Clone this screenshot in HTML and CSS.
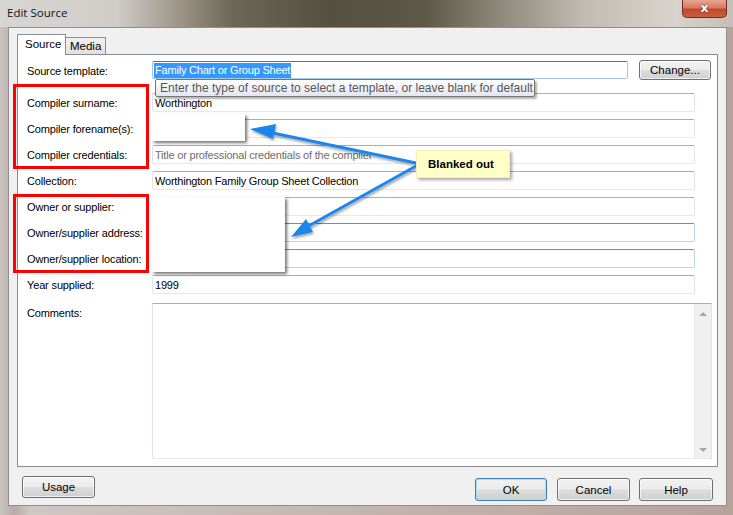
FILE: index.html
```html
<!DOCTYPE html>
<html>
<head>
<meta charset="utf-8">
<link rel="stylesheet" href="styles.css">
</head>
<body>
<div class="window">
  <div class="titlebar">
    <span class="title">Edit Source</span>
    <div class="close"><span>x</span></div>
  </div>
  <div class="client">
    <div class="tabs">
      <div class="tab active">Source</div>
      <div class="tab">Media</div>
    </div>
    <div class="panel">
      <div class="row first">
        <span class="label">Source template:</span>
        <div class="input focus"><span class="sel">Family Chart or Group Sheet</span></div>
        <div class="btn change">Change...</div>
      </div>
      <div class="row"><span class="label">Compiler surname:</span><div class="input">Worthington</div></div>
      <div class="row"><span class="label">Compiler forename(s):</span><div class="input"></div></div>
      <div class="row"><span class="label">Compiler credentials:</span><div class="input placeholder">Title or professional credentials of the compiler</div></div>
      <div class="row"><span class="label">Collection:</span><div class="input">Worthington Family Group Sheet Collection</div></div>
      <div class="row"><span class="label">Owner or supplier:</span><div class="input"></div></div>
      <div class="row"><span class="label">Owner/supplier address:</span><div class="input hover"></div></div>
      <div class="row"><span class="label">Owner/supplier location:</span><div class="input hover"></div></div>
      <div class="row"><span class="label">Year supplied:</span><div class="input">1999</div></div>
      <div class="row comments">
        <span class="label">Comments:</span>
        <div class="textarea">
          <div class="scrollbar"><span class="arr up"></span><span class="arr down"></span></div>
        </div>
      </div>
    </div>
    <div class="footer">
      <div class="btn usage">Usage</div>
      <div class="spacer"></div>
      <div class="btn ok">OK</div>
      <div class="btn cancel">Cancel</div>
      <div class="btn help">Help</div>
    </div>
  </div>

  <div class="tooltip">Enter the type of source to select a template, or leave blank for default</div>
  <div class="blank blank1"></div>
  <div class="blank blank2"></div>
  <div class="redbox red1"></div>
  <div class="redbox red2"></div>
  <svg class="arrows" width="733" height="515" viewBox="0 0 733 515">
    <defs>
      <filter id="sh" x="-10%" y="-10%" width="120%" height="130%">
        <feDropShadow dx="1" dy="2" stdDeviation="1" flood-color="#000" flood-opacity="0.35"/>
      </filter>
    </defs>
    <g filter="url(#sh)" fill="#1e86ea" stroke="#1e86ea" stroke-width="3" stroke-linecap="round">
      <line x1="416" y1="163" x2="268" y2="132"/>
      <polygon stroke="none" points="250,129 276,124 273,139"/>
      <line x1="416" y1="166" x2="305" y2="228"/>
      <polygon stroke="none" points="291,237 306,219 313,232"/>
    </g>
  </svg>
  <div class="callout">Blanked out</div>
</div>
</body>
</html>
```
FILE: styles.css
```css
html, body {
  margin: 0;
  padding: 0;
}
body {
  width: 733px;
  height: 515px;
  overflow: hidden;
  font-family: "Liberation Sans", Arial, sans-serif;
  font-size: 11px;
  color: #000;
}
.window {
  position: relative;
  width: 733px;
  height: 515px;
  display: flex;
  flex-direction: column;
  background: linear-gradient(to right, #c9c2bf 0%, #b9aba7 2%, #cfc7c4 4%, #c4b4ae 50%, #b8a39c 100%);
}
.titlebar {
  height: 27px;
  flex: none;
  display: flex;
  align-items: flex-start;
  background: linear-gradient(to right, #d8d6d4 0%, #cfccc8 16%, #9f988a 24%, #6c6656 32%, #54503f 45%, #5d5947 58%, #8e887a 68%, #c2bcb3 80%, #d9d3cd 92%, #c7bcb6 100%);
}
.title {
  padding: 5px 0 0 7px;
  font-family: "Open Sans", "Liberation Sans", sans-serif;
  font-size: 11.5px;
  color: #111;
}
.close {
  margin-left: auto;
  margin-right: 6px;
  width: 45px;
  height: 18px;
  border: 1px solid #6b2c21;
  border-top: none;
  border-radius: 0 0 5px 5px;
  background: linear-gradient(to bottom, #e9a596 0%, #d77a64 45%, #c2472b 55%, #c9603f 100%);
  display: flex;
  align-items: center;
  justify-content: center;
  box-sizing: border-box;
}
.close span {
  color: #fff;
  font-weight: bold;
  font-family: "DejaVu Sans", sans-serif;
  font-size: 13px;
  line-height: 1;
  margin-top: -2px;
  text-shadow: 0 0 1px #5b1d12, 0 0 1px #5b1d12;
}
.client {
  flex: 1;
  margin: 0 6px 9px 8px;
  border: 1px solid #8e8e8e;
  background: #f0f0f0;
  display: flex;
  flex-direction: column;
}
.tabs {
  display: flex;
  align-items: flex-end;
  padding: 6px 0 0 8px;
  height: 20px;
  position: relative;
  z-index: 2;
}
.tab {
  box-sizing: border-box;
  height: 17px;
  padding: 0 4px;
  border: 1px solid #898c95;
  border-bottom: none;
  border-left: none;
  background: linear-gradient(to bottom, #f2f2f2, #e0e0e0);
  line-height: 17px;
  font-size: 11.5px;
}
.tab.active {
  height: 21px;
  width: 49px;
  margin-bottom: -1px;
  border-left: 1px solid #898c95;
  background: #fff;
  padding: 1px 0 0 7px;
}
.panel {
  margin: 0 8px;
  height: 413px;
  box-sizing: border-box;
  border: 1px solid #898c95;
  background: #fff;
  padding: 5px 5px 7px 9px;
  display: flex;
  flex-direction: column;
  gap: 7px;
}
.row {
  display: flex;
  align-items: center;
  height: 19px;
}
.row.first {
  height: 20px;
  margin-bottom: 6px;
}
.label {
  width: 125px;
  flex: none;
  white-space: nowrap;
  letter-spacing: -0.15px;
  padding-top: 1px;
}
.input {
  flex: 1;
  height: 19px;
  box-sizing: border-box;
  margin-right: 17px;
  border: 1px solid #e2e3ea;
  border-top-color: #abadb3;
  border-bottom-color: #e3e9ef;
  border-radius: 2px;
  padding: 2px 0 0 2px;
  line-height: 15px;
  white-space: nowrap;
  overflow: hidden;
  letter-spacing: -0.2px;
}
.input.focus {
  height: 18px;
  margin-right: 11px;
  border-color: #a4c9e3;
  border-top-color: #3d7bad;
  padding: 1px 0 0 1px;
  line-height: 14px;
}
.sel {
  background: #3399ff;
  color: #fff;
  padding: 0 1px 1px 1px;
  display: inline-block;
  line-height: 14px;
}
.input.hover {
  border-color: #b7d5ea;
  border-top-color: #5794bf;
}
.input.placeholder {
  color: #6d6d6d;
}
.btn {
  box-sizing: border-box;
  height: 21px;
  width: 73px;
  border: 1px solid #707070;
  border-radius: 3px;
  background: linear-gradient(to bottom, #f2f2f2 0%, #ebebeb 48%, #dddddd 52%, #cfcfcf 100%);
  display: flex;
  align-items: center;
  justify-content: center;
  flex: none;
  box-shadow: inset 0 0 0 1px rgba(255,255,255,0.7);
  font-size: 11.5px;
}
.btn.change {
  width: 72px;
  height: 20px;
  margin-right: 1px;
}
.comments {
  align-items: flex-start;
  height: 156px;
  margin-top: 2px;
}
.comments .label {
  padding-top: 4px;
}
.textarea {
  flex: 1;
  height: 156px;
  box-sizing: border-box;
  border: 1px solid #e2e3ea;
  border-top-color: #abadb3;
  border-bottom-color: #e3e9ef;
  display: flex;
  justify-content: flex-end;
}
.scrollbar {
  width: 16px;
  background: #f0f0f0;
  border-left: 1px solid #e8e8e8;
  display: flex;
  flex-direction: column;
  justify-content: space-between;
  align-items: center;
  padding: 8px 0 6px;
}
.arr {
  width: 0;
  height: 0;
  border-left: 4px solid transparent;
  border-right: 4px solid transparent;
}
.arr.up { border-bottom: 4px solid #a8a8a8; }
.arr.down { border-top: 4px solid #a8a8a8; }
.footer {
  display: flex;
  align-items: flex-start;
  padding: 9px 13px 0 13px;
  gap: 10px;
}
.spacer { flex: 1; }
.btn.usage {
  height: 22px;
}
.btn.ok, .btn.cancel, .btn.help {
  margin-top: 2px;
  height: 23px;
}
.btn.ok {
  width: 72px;
  border-color: #3c7fb1;
  box-shadow: inset 0 0 0 1px #a8e0f8;
}
.btn.help {
  width: 74px;
  margin-left: -1px;
}
.tooltip {
  position: absolute;
  left: 155px;
  top: 79px;
  width: 380px;
  height: 18px;
  box-sizing: border-box;
  border: 1px solid #767676;
  border-radius: 2px;
  background: linear-gradient(to bottom, #ffffff, #e4e5f0);
  box-shadow: 2px 2px 2px rgba(0,0,0,0.3);
  padding: 1px 0 0 4px;
  color: #575757;
  font-size: 12px;
  line-height: 15px;
  white-space: nowrap;
}
.blank {
  position: absolute;
  background: #fff;
  box-shadow: 2px 2px 3px rgba(0,0,0,0.55);
}
.blank1 { left: 152px; top: 114px; width: 93px; height: 27px; }
.blank2 { left: 152px; top: 197px; width: 133px; height: 75px; }
.redbox {
  position: absolute;
  box-sizing: border-box;
  border: 3px solid #ff0000;
}
.red1 { left: 13px; top: 84px; width: 136px; height: 85px; }
.red2 { left: 13px; top: 194px; width: 136px; height: 79px; }
.arrows {
  position: absolute;
  left: 0;
  top: 0;
  pointer-events: none;
}
.callout {
  position: absolute;
  left: 416px;
  top: 150px;
  width: 94px;
  height: 28px;
  box-sizing: border-box;
  background: #ffffc8;
  border: 1px solid #f2f0b8;
  box-shadow: 2px 2px 3px rgba(0,0,0,0.35);
  font-weight: bold;
  font-size: 11.5px;
  padding: 7px 0 0 11px;
}
```
